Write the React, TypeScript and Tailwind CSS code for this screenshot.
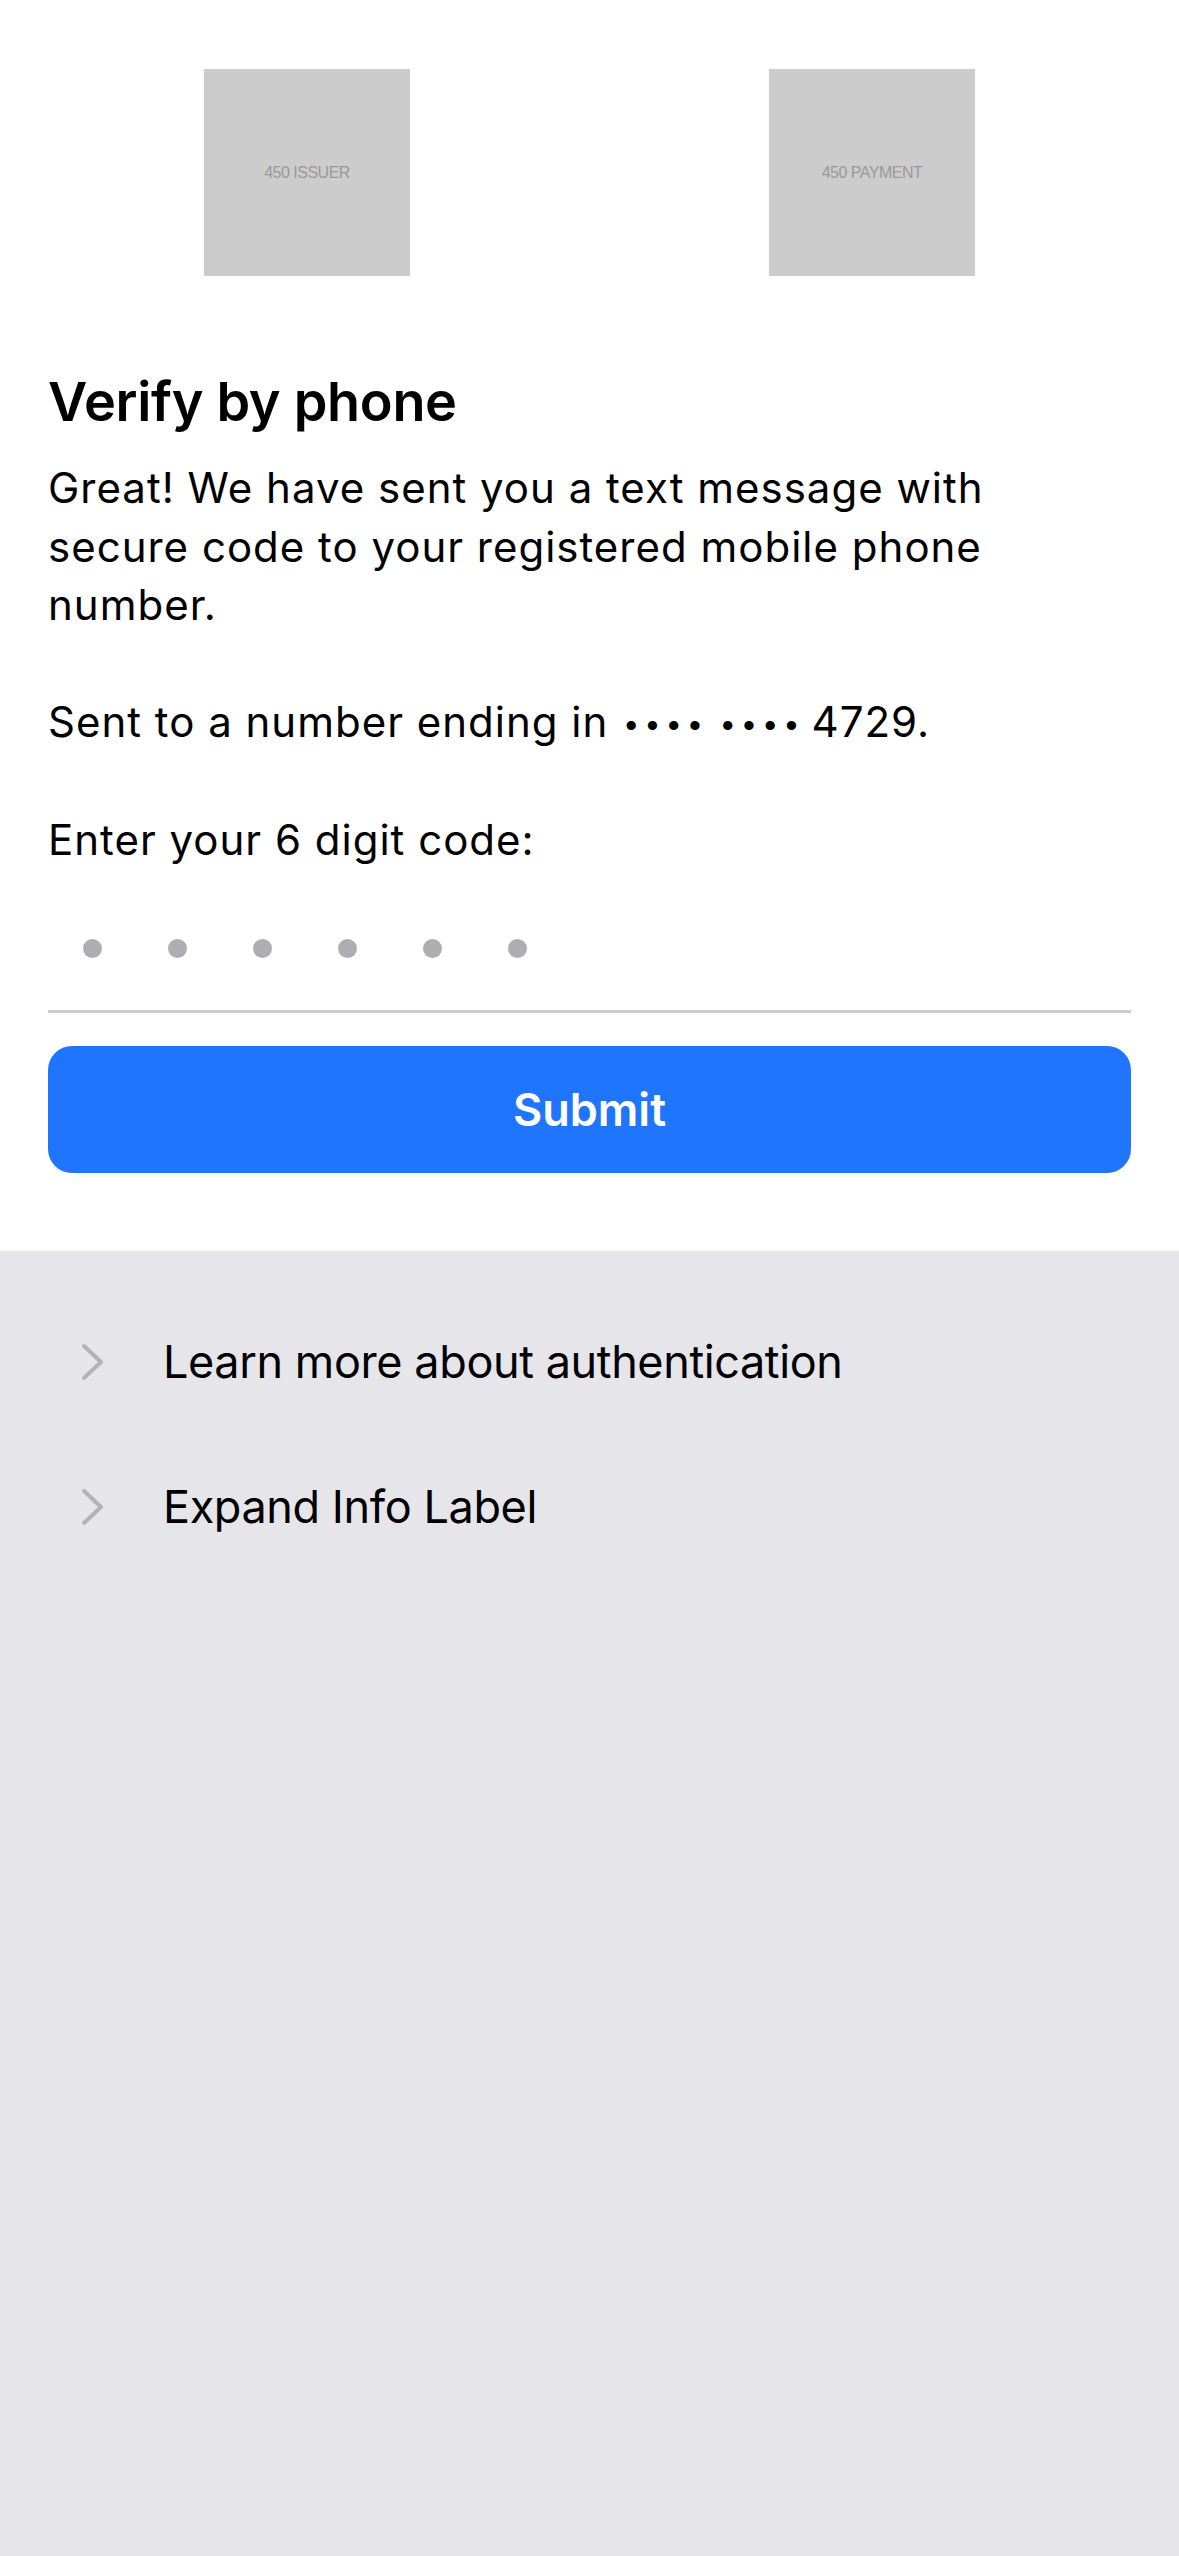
import React from "react";

function Placeholder({ label }: { label: string }) {
  return (
    <div className="w-[206px] h-[207px] bg-[#cccccc] flex items-center justify-center">
      <span className="text-[16px] leading-none text-[#999999] [font-family:'Liberation_Sans',Arial,sans-serif] tracking-[-0.5px]">
        {label}
      </span>
    </div>
  );
}

function Chevron() {
  return (
    <svg width="24" height="38" viewBox="0 0 24 38" className="shrink-0">
      <polyline
        points="3,3 20,19 3,35"
        fill="none"
        stroke="#b2b2b7"
        strokeWidth="4"
        strokeLinecap="round"
        strokeLinejoin="round"
      />
    </svg>
  );
}

export default function App() {
  const lines1 = [
    "Great! We have sent you a text message with",
    "secure code to your registered mobile phone",
    "number.",
  ];
  const bullet =
    "[font-family:'Liberation_Sans',Arial,sans-serif] text-[34px] leading-none tracking-[9.3px]";
  return (
    <div className="min-h-[2556px] flex flex-col bg-white text-black [font-family:Inter,'Noto_Sans',sans-serif]">
      <div className="bg-white px-[48px] pt-[69px] pb-[78px]">
        <div className="flex justify-between px-[156px]">
          <Placeholder label="450 ISSUER" />
          <Placeholder label="450 PAYMENT" />
        </div>
        <h1 className="mt-[95px] text-[54px] leading-[62px] font-semibold tracking-[-0.3px]">
          Verify by phone
        </h1>
        <div className="mt-[26px] text-[42px] leading-[58.6px] tracking-[1px]">
          {lines1.map((l) => (
            <div key={l} className="whitespace-nowrap">{l}</div>
          ))}
          <div className="h-[58.6px]" />
          <div className="whitespace-nowrap h-[58.6px]">
            <span>Sent to a number ending in</span>
            <span className={"ml-[17px] " + bullet}>••••</span>
            <span className={"ml-[11.6px] " + bullet}>••••</span>
            <span className="ml-[5px]">4729.</span>
          </div>
          <div className="h-[58.6px]" />
          <div className="whitespace-nowrap">Enter your 6 digit code:</div>
        </div>
        <div className="flex gap-[66px] pl-[35px] pt-[70px] pb-[52px]">
          {[0, 1, 2, 3, 4, 5].map((i) => (
            <div key={i} className="w-[19px] h-[19px] rounded-full bg-[#aeaeb2]" />
          ))}
        </div>
        <div className="h-[3px] bg-[#cccccc]" />
        <button className="mt-[33px] w-full h-[127px] rounded-[24px] bg-[#1f75fe] text-white text-[45px] font-semibold flex items-center justify-center">
          Submit
        </button>
      </div>
      <div className="flex-1 bg-[#e5e5ea] pt-[38px]">
        {["Learn more about authentication", "Expand Info Label"].map((t) => (
          <div key={t} className="h-[145px] flex items-center pl-[81px] gap-[58px]">
            <Chevron />
            <span className="text-[45px] tracking-[-0.4px]">{t}</span>
          </div>
        ))}
      </div>
    </div>
  );
}
